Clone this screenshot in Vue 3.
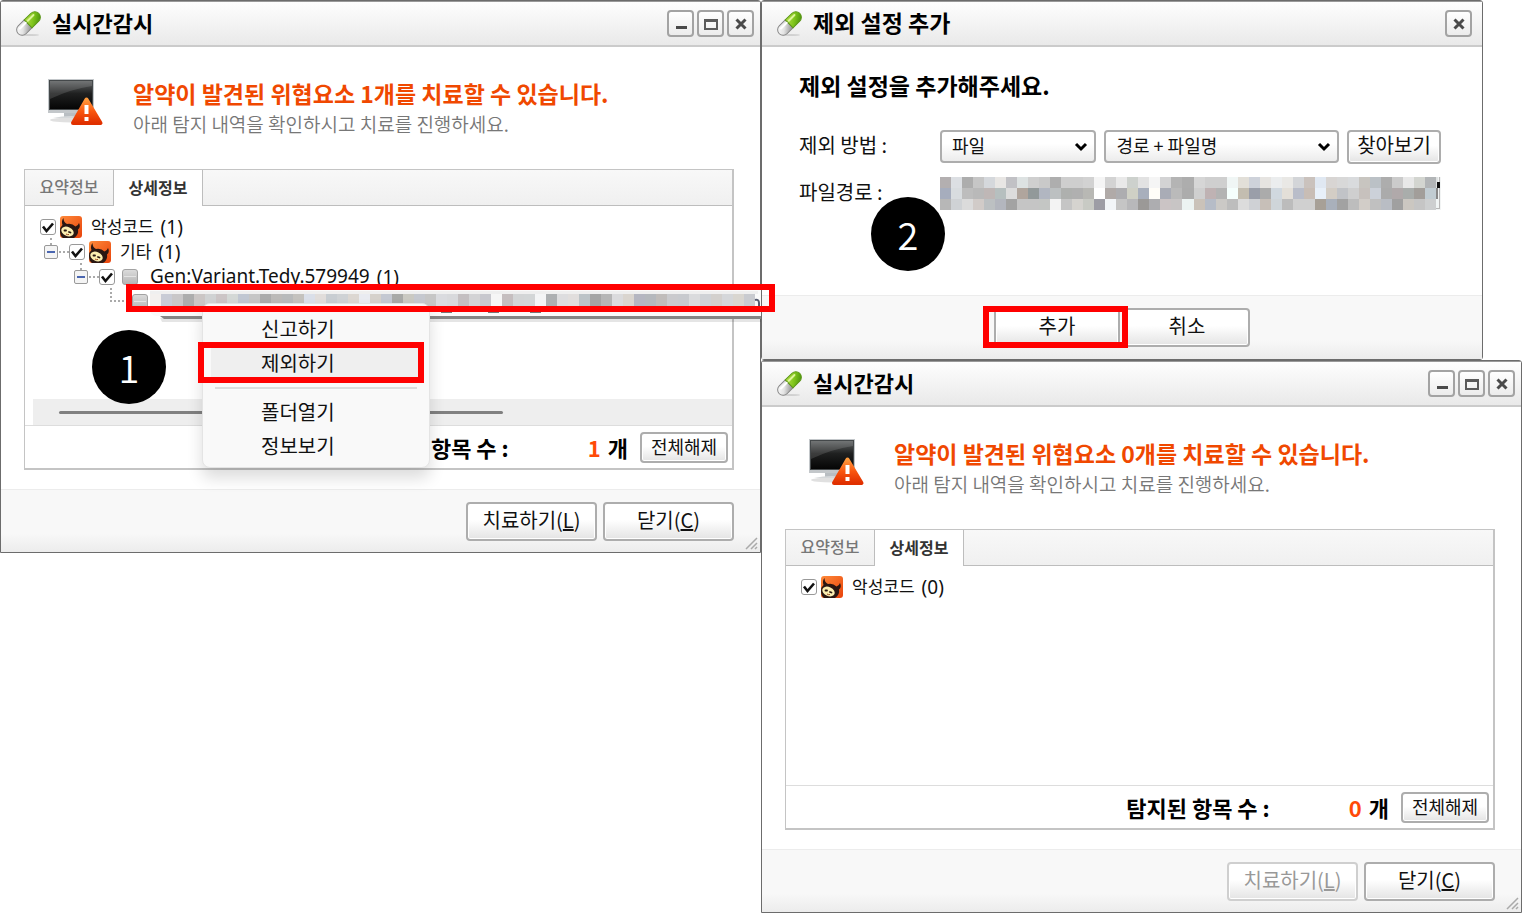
<script setup>
import { ref } from 'vue'

const scanners = [
  {
    id: 'before',
    count: 1,
    canTreat: true,
    rows: [
      { level: 0, kind: 'malware', label: '악성코드', count: '(1)' },
      { level: 1, kind: 'malware', label: '기타', count: '(1)' },
      { level: 2, kind: 'file', label: 'Gen:Variant.Tedy.579949', count: '(1)', latin: true },
      { level: 3, kind: 'leaf', label: '', count: '' },
    ],
  },
  {
    id: 'after',
    count: 0,
    canTreat: false,
    rows: [{ level: 0, kind: 'malware', label: '악성코드', count: '(0)' }],
  },
]

const method = ref('파일')
const scope = ref('경로 + 파일명')

const pathMosaic = [
  'b3afb0 dcdfe3 adadad c6c6c6 d5d8dc e8e6e4 c1c1c5 dde2e2 cfcfcf c9c9c9 aeaeae cecece cecece d2d2d2 f5f5f5 d3d3d3 e9e9e9 cdd1cd e2e2e2 f5f5f5 d3d3d4 b4b4b4 adadad d6d6d6 cfcfcf cfcfcf f0f6f5 e2dfd8 ced2da e6e4e1 ebedee e9e8e5 d3d5d8 cac2bd e0e8f2 d8d5d3 d8d8d8 d9dbdd c8c5c0 bbc1c6 adadad cbcbcb e8e8e8 d3d5d0 b2b5b7 dfe2e2',
  'a6adbd d8dcdf bdbdbd b9b9b9 bfb7b6 b6bfbf dcdcdc b0a59d 92999a b1b6c1 bcc0c1 aeb0ae b0b0b0 b8b8b4 ffffff b0aaa8 adadb0 cfd0c5 a8afbc fffdf8 a9acb6 bababa acacac cfcfcf bfb2b3 b3b3b3 f5fffd c3bdb0 9a9ea9 ababab d0d8df e3dfd8 b9bdc9 c8bdb5 e8f0f9 d3cdc5 c1c3c7 cfcfcf c7c1bd ccd1d9 ababab b0a9aa a9adab a29e9a c1ccd2 888888',
  'b7b7b7 cfd2d5 dbdbdb d1cbc8 bcc0c2 b3b6be a3a3a3 c5c5c5 c5c5c5 c4c6c4 f3f3f3 c5c5c5 d5d3cf c8cac4 9d9da5 f2f5f8 c5c5c5 b8b8ba 9b9997 adadb0 cbc4c5 c8c5c5 ecf3f2 cac2b9 b6bcc7 cbc9c6 bdbdbd dcdcdc cfd1d5 c7bfb8 cfd5d9 bcbcbc d0d0d0 d0d0d0 a7a097 a9b0bb a2a2a2 bdbdbd d2cdc8 c0c0c0 b9bdc4 a0a0a0 cbc7c1 c5c5c5 cdcfd0 f0f5f5',
].map((row) => row.split(' ').map((c) => '#' + c))

const tipMosaic =
  'f3f0ee c9ccd6 c9c7c8 adadad cbc6c5 d0d2d3 ccc5c6 d4d8d6 c1c7d2 c6c6c6 ababab bcbab8 b8babb c4c2be dadfe9 e1dddb c8cdd2 cfd2d5 dcd7d2 e9ebf1 d6d1cb c4c8d2 a8a9a7 cac9c2 c5c8cf c6c6c6 dadbdf d8d9dc c4bfc1 d3d3d5 c8c8ce f6f6f6 c5bebf d3d5d6 d3d6d7 f4f5f6 adb0b2 dddddf e1dedd bcc3c7 a5a5a5 b6b6b6 dbdbdd dad5cf b5b6c1 b5b8bd c0bcba cacacd c8cace dadbdd cfd2d6 d3d0cd d5d7da d9d6d0 c9cbd0'
    .split(' ')
    .map((c) => '#' + c)
</script>

<template>
  <!-- shared icon shapes -->
  <svg class="defs" width="0" height="0" aria-hidden="true">
    <defs>
      <linearGradient id="capGreen" x1="0" y1="0" x2="1" y2="1">
        <stop offset="0" stop-color="#b7e04c" /><stop offset="0.5" stop-color="#7fc41c" /><stop offset="1" stop-color="#3f8a08" />
      </linearGradient>
      <linearGradient id="capWhite" x1="0" y1="0" x2="1" y2="1">
        <stop offset="0" stop-color="#ffffff" /><stop offset="0.5" stop-color="#e4e4e4" /><stop offset="1" stop-color="#8c8c8c" />
      </linearGradient>
      <linearGradient id="screen" x1="0" y1="0" x2="0" y2="1">
        <stop offset="0" stop-color="#5d6061" /><stop offset="0.45" stop-color="#1f2020" /><stop offset="1" stop-color="#050505" />
      </linearGradient>
      <linearGradient id="warn" x1="0" y1="0" x2="0" y2="1">
        <stop offset="0" stop-color="#ff9a3c" /><stop offset="0.5" stop-color="#f9560f" /><stop offset="1" stop-color="#e03000" />
      </linearGradient>
      <linearGradient id="imp" x1="0" y1="0" x2="1" y2="1">
        <stop offset="0" stop-color="#ff8a3a" /><stop offset="1" stop-color="#e8430b" />
      </linearGradient>
      <linearGradient id="greyBox" x1="0" y1="0" x2="0" y2="1">
        <stop offset="0" stop-color="#dcdcdc" /><stop offset="1" stop-color="#b4b4b4" />
      </linearGradient>
      <symbol id="pill" viewBox="0 0 28 28">
        <ellipse cx="15" cy="25" rx="9" ry="1" fill="#000" opacity="0.12" />
        <g transform="rotate(-45 13.5 13.5)">
          <path d="M13 8H4.500a5.500 5.500 0 0 0 0 11H13z" fill="url(#capWhite)" stroke="#858585" />
          <path d="M13 8h9.500a5.500 5.500 0 0 1 0 11h-9.500z" fill="url(#capGreen)" stroke="#5a9516" />
          <path d="M4 11h8" stroke="#fff" stroke-width="2" stroke-linecap="round" />
          <path d="M15 11h8" stroke="#dcf59a" stroke-width="2" stroke-linecap="round" />
        </g>
      </symbol>
      <symbol id="monitor" viewBox="0 0 58 50">
        <ellipse cx="24" cy="42" rx="21" ry="2.500" fill="#000" opacity="0.12" />
        <path d="M17 34h14v5H17z" fill="#b9bec2" />
        <path d="M6 40q18-4 36 0z" fill="#d5d8da" />
        <rect x="1" y="1" width="46" height="34" fill="#c3c7ca" />
        <rect x="2" y="2" width="44" height="30" fill="#44484a" />
        <rect x="3" y="3" width="42" height="28" fill="url(#screen)" />
        <path d="M3 3h42v5Q24 11 3 21z" fill="#fff" opacity="0.13" />
        <path d="M39.500 21.500L53.500 45H26z" fill="url(#warn)" stroke="url(#warn)" stroke-width="4" stroke-linejoin="round" />
        <path d="M37.500 27h4v9h-4zM37.500 39h4v4h-4z" fill="#fff" />
      </symbol>
      <symbol id="imp-icon" viewBox="0 0 22 22">
        <rect width="22" height="22" rx="3" fill="url(#imp)" />
        <path d="M3.500 2Q1 5 2.500 9Q0 11 0 15Q0 20 3 22H14Q19 19 18 13.500Q21 11 19 7Q18 10 15.500 10.500Q12 7 7 8Q3.500 6.500 3.500 2z" fill="#2a1712" />
        <ellipse cx="7.500" cy="15.500" rx="6.500" ry="4.500" transform="rotate(25 7.500 15.500)" fill="#fbeeb0" />
        <path d="M4.500 14.500l1.500 0M9 16l1.500 .5" stroke="#2a1712" stroke-width="1.800" stroke-linecap="round" />
        <path d="M6 18q1.500 1 3 .5" fill="none" stroke="#a04a22" />
      </symbol>
      <symbol id="tick" viewBox="0 0 16 16">
        <path d="M3 7.500L6.500 12L13 4.500" fill="none" stroke="#111" stroke-width="2.600" />
      </symbol>
      <symbol id="grey-box" viewBox="0 0 16 16">
        <rect x="0.500" y="0.500" width="15" height="15" rx="2.500" fill="url(#greyBox)" stroke="#a2a2a2" />
        <path d="M2 7.500h12" stroke="#e4e4e4" />
      </symbol>
      <symbol id="chevron" viewBox="0 0 14 10">
        <path d="M2 2l5 5 5-5" fill="none" stroke="#000" stroke-width="3" />
      </symbol>
    </defs>
  </svg>

  <main class="page">
    <div class="column" v-for="(win, wi) in scanners" :key="win.id">
      <!-- exclusion dialog stacked above the second scanner window -->
      <section v-if="wi === 1" class="window dialog">
        <header class="titlebar">
          <svg class="pill"><use href="#pill" /></svg>
          <h1>제외 설정 추가</h1>
          <div class="controls">
            <button type="button" aria-label="닫기">
              <svg viewBox="0 0 16 16"><path d="M3.500 3.500l9 9M12.500 3.500l-9 9" stroke="#4a4a4a" stroke-width="3" /></svg>
            </button>
          </div>
        </header>
        <div class="dialog-body">
          <h2>제외 설정을 추가해주세요.</h2>
          <div class="field">
            <label for="method">제외 방법 :</label>
            <span class="select method">
              <select id="method" v-model="method"><option>파일</option><option>폴더</option></select>
              <svg><use href="#chevron" /></svg>
            </span>
            <span class="select scope">
              <select v-model="scope" aria-label="범위"><option>경로 + 파일명</option><option>파일명</option></select>
              <svg><use href="#chevron" /></svg>
            </span>
            <button type="button" class="btn browse">찾아보기</button>
          </div>
          <div class="field">
            <span class="name">파일경로 :</span>
            <svg class="path" viewBox="0 0 500 33" preserveAspectRatio="none" shape-rendering="crispEdges">
              <g v-for="(row, y) in pathMosaic" :key="y">
                <rect v-for="(c, x) in row" :key="x" :x="x * 11" :y="y * 11" width="11" height="11" :fill="c" />
              </g>
              <path d="M497 0h3v33h-3z" fill="#f2f4f4" />
              <path d="M499 0v31h-4" fill="none" stroke="#b8b8b8" />
              <path d="M498 5v6" stroke="#111" stroke-width="3" />
            </svg>
          </div>
        </div>
        <footer class="footer center">
          <span class="marked">
            <button type="button" class="btn">추가</button>
            <i class="redbox around-add"></i>
          </span>
          <button type="button" class="btn">취소</button>
        </footer>
        <span class="step step-two">2</span>
      </section>

      <section class="window scanner">
        <header class="titlebar">
          <svg class="pill"><use href="#pill" /></svg>
          <h1>실시간감시</h1>
          <div class="controls">
            <button type="button" aria-label="최소화">
              <svg viewBox="0 0 16 16"><path d="M3 11.500h11" stroke="#4a4a4a" stroke-width="3" /></svg>
            </button>
            <button type="button" aria-label="최대화">
              <svg viewBox="0 0 16 16"><path d="M1 3h14v11H1zM3 6v6h10V6z" fill="#5a5a5a" fill-rule="evenodd" /></svg>
            </button>
            <button type="button" aria-label="닫기">
              <svg viewBox="0 0 16 16"><path d="M3.500 3.500l9 9M12.500 3.500l-9 9" stroke="#4a4a4a" stroke-width="3" /></svg>
            </button>
          </div>
        </header>

        <div class="summary">
          <svg class="monitor"><use href="#monitor" /></svg>
          <div>
            <h2>알약이 발견된 위협요소 {{ win.count }}개를 치료할 수 있습니다.</h2>
            <p>아래 탐지 내역을 확인하시고 치료를 진행하세요.</p>
          </div>
        </div>

        <div class="panel">
          <div class="tabs" role="tablist">
            <button type="button" role="tab" aria-selected="false">요약정보</button>
            <button type="button" role="tab" aria-selected="true" class="active">상세정보</button>
          </div>
          <ul class="tree">
            <li v-for="(row, i) in win.rows" :key="i" :class="['level-' + row.level, row.kind]">
              <span v-if="row.level === 1 || row.level === 2" class="branch"><i class="stem"></i><i class="minus"></i></span>
              <span v-if="row.kind === 'leaf'" class="elbow"></span>
              <label>
                <span v-if="row.kind !== 'leaf'" class="check">
                  <input type="checkbox" checked />
                  <svg><use href="#tick" /></svg>
                </span>
                <svg v-if="row.kind === 'malware'" class="imp"><use href="#imp-icon" /></svg>
                <svg v-else class="grey"><use href="#grey-box" /></svg>
                <span :class="['text', { latin: row.latin }]">{{ row.label }}</span>
                <span class="num">{{ row.count }}</span>
              </label>
            </li>
          </ul>
          <div v-if="win.count" class="hscroll"><i></i></div>
          <div class="totals">
            <span class="caption">탐지된 항목 수 :</span>
            <span class="count">{{ win.count }}</span>
            <span class="unit">개</span>
            <button type="button" class="btn clear">전체해제</button>
          </div>
        </div>

        <footer class="footer">
          <button type="button" class="btn wide" :disabled="!win.canTreat">치료하기(<u>L</u>)</button>
          <button type="button" class="btn wide">닫기(<u>C</u>)</button>
          <svg class="grip" viewBox="0 0 13 13"><path d="M1 12L12 1M6 12l6-6M10 12l2-2" stroke="#aaa" stroke-width="1.500" /></svg>
        </footer>
      </section>

      <template v-if="wi === 0">
        <svg class="tip" viewBox="0 0 611 38">
          <path d="M10 31H611V35H12z" fill="#000" opacity="0.1" />
          <path d="M10 29H611V32H14z" fill="#858585" />
          <path d="M0 0H611V29H7Q0 29 0 22z" fill="#fafafa" />
          <g shape-rendering="crispEdges">
            <path d="M0 4H608V7H0z" fill="#efefef" />
            <rect v-for="(c, x) in tipMosaic" :key="x" :x="x * 11" y="7" width="11" height="13" :fill="c" />
            <path d="M291 25h11M338 25h11M380 25h11" stroke="#777" stroke-width="2" />
          </g>
          <path d="M605 13q4-1 4 3v3" fill="none" stroke="#555a70" stroke-width="2" />
        </svg>
        <ul class="menu" role="menu">
          <li><button type="button" role="menuitem">신고하기</button></li>
          <li class="hot"><button type="button" role="menuitem">제외하기</button><i class="redbox around-item"></i></li>
          <li class="rule" role="separator"></li>
          <li><button type="button" role="menuitem">폴더열기</button></li>
          <li><button type="button" role="menuitem">정보보기</button></li>
        </ul>
        <i class="redbox around-row"></i>
        <span class="step step-one">1</span>
      </template>
    </div>
  </main>
</template>

<style>
body {
  background: #fff;
}
</style>

<style scoped>
* {
  box-sizing: border-box;
}
h1,
h2,
p,
ul {
  margin: 0;
  padding: 0;
  font-size: inherit;
  list-style: none;
}
button,
select,
input {
  font: inherit;
  color: inherit;
  margin: 0;
}
.defs {
  position: absolute;
}
.page {
  display: grid;
  grid-template-columns: 1fr 1fr;
  align-items: start;
  font-family: 'Noto Sans CJK KR', 'Noto Sans', sans-serif;
  font-size: 20px;
  line-height: 24px;
  color: #111;
}
.column {
  position: relative;
}
.window {
  display: flex;
  flex-direction: column;
  border: 1px solid #6c6c6c;
  border-radius: 3px 3px 0 0;
  background: #fff;
}
.dialog {
  position: relative;
  margin-right: 39px;
  border-radius: 3px;
}
.titlebar {
  display: flex;
  align-items: center;
  height: 46px;
  padding: 0 6px 0 14px;
  border-top: 1px solid #999;
  border-bottom: 2px solid #cbcbcb;
  background: linear-gradient(#fefefe, #e9e9e9);
}
.dialog .titlebar {
  padding-right: 10px;
}
.pill {
  width: 28px;
  height: 28px;
}
.titlebar h1 {
  flex: 1;
  margin-left: 9px;
  padding-bottom: 3px;
  font-size: 22px;
  font-weight: 700;
  color: #000;
}
.titlebar .pill {
  flex: none;
}
.dialog .titlebar h1 {
  font-size: 23px;
}
.controls {
  display: flex;
  gap: 3px;
}
.controls button {
  display: grid;
  place-items: center;
  width: 27px;
  height: 27px;
  padding: 0;
  border: 2px solid #a3a3a3;
  border-radius: 4px;
  background: linear-gradient(#fff, #ececec);
}
.controls svg {
  width: 16px;
  height: 16px;
}
.summary {
  display: flex;
  gap: 28px;
  padding: 31px 24px 0 46px;
  height: 122px;
}
.monitor {
  flex: none;
  width: 58px;
  height: 50px;
}
.summary h2 {
  margin-top: 3px;
  font-size: 23px;
  font-weight: 700;
  color: #f04800;
}
.summary p {
  margin-top: 7px;
  font-size: 19px;
  font-weight: 350;
  color: #777;
}
.panel {
  display: flex;
  flex-direction: column;
  min-height: 301px;
  margin: 0 26px 19px 23px;
  border: 2px solid #c4c4c4;
  border-width: 1px 2px 2px 1px;
}
.tabs {
  display: flex;
  height: 36px;
  border-bottom: 1px solid #bdbdbd;
  background: linear-gradient(#f8f8f8, #f0f0f0);
}
.tabs button {
  width: 89px;
  height: 35px;
  padding: 0 0 3px;
  border: 0;
  border-right: 1px solid #bdbdbd;
  background: none;
  font-size: 16px;
  font-weight: 500;
  color: #777;
}
.tabs .active {
  height: 36px;
  background: #fff;
  font-weight: 700;
  color: #333;
}
.tree {
  flex: 1;
  padding: 8px 0 0 15px;
}
.tree li {
  display: flex;
  align-items: center;
  height: 25px;
}
.tree label {
  display: flex;
  align-items: center;
  white-space: nowrap;
}
.level-1 {
  padding-left: 4px;
}
.level-2 {
  padding-left: 34px;
}
.level-3 {
  padding-left: 70px;
}
.branch {
  position: relative;
  display: flex;
  width: 25px;
  border-bottom: 2px dotted #aaa;
}
.stem {
  position: absolute;
  left: 6px;
  bottom: 6px;
  height: 7px;
  border-left: 2px dotted #aaa;
}
.minus {
  position: absolute;
  left: 0;
  bottom: -8px;
  width: 14px;
  height: 14px;
  border: 1px solid #999;
  border-radius: 2px;
  background: linear-gradient(#4a66b0, #4a66b0) center / 8px 2px no-repeat, #f4f4f4;
}
.elbow {
  width: 22px;
  height: 14px;
  margin-bottom: 14px;
  border-left: 2px dotted #aaa;
  border-bottom: 2px dotted #aaa;
}
.check {
  position: relative;
  width: 16px;
  height: 16px;
}
.check input {
  display: block;
  width: 16px;
  height: 16px;
  appearance: none;
  border: 1px solid #999;
  border-radius: 3px;
  background: #fff;
}
.check svg {
  position: absolute;
  inset: 0;
  width: 16px;
  height: 16px;
  pointer-events: none;
}
.imp {
  width: 22px;
  height: 22px;
  margin: 0 9px 0 4px;
}
.grey {
  width: 16px;
  height: 16px;
  margin: 0 12px 0 7px;
}
.leaf .grey {
  margin: 0;
}
.text {
  padding-bottom: 1px;
  font-size: 17px;
}
.latin,
.num {
  font-family: 'Noto Sans', sans-serif;
  font-size: 19px;
}
.num {
  margin-left: 7px;
}
.hscroll {
  height: 26px;
  margin-left: 8px;
  padding: 12px 0 0 26px;
  background: #eee;
}
.hscroll i {
  display: block;
  width: 66%;
  height: 3px;
  border-radius: 2px;
  background: #808080;
}
.totals {
  display: flex;
  align-items: center;
  justify-content: flex-end;
  height: 43px;
  padding-right: 4px;
  border-top: 1px solid #ddd;
  font-size: 22px;
  font-weight: 700;
  color: #000;
}
.count {
  width: 92px;
  text-align: right;
  color: #ff4a08;
}
.unit {
  margin: 0 12px 0 7px;
}
.btn {
  width: 126px;
  height: 39px;
  padding: 0 0 3px;
  border: 2px solid #adadad;
  border-radius: 4px;
  background: linear-gradient(#fff 45%, #e4e4e4);
  box-shadow: inset 0 0 0 1px #fff;
  font-size: 20px;
  font-weight: 400;
  line-height: 24px;
  color: #111;
}
.wide {
  width: 131px;
}
.btn:disabled {
  border-color: #cfcfcf;
  color: #999;
}
.clear {
  width: 88px;
  height: 31px;
  font-size: 18px;
}
.footer {
  position: relative;
  display: flex;
  gap: 6px;
  justify-content: flex-end;
  height: 63px;
  padding: 12px 26px 0;
  border-top: 1px solid #ececec;
  background: linear-gradient(#f8f8f8 70%, #ececec);
}
.footer.center {
  justify-content: center;
  gap: 4px;
}
.grip {
  position: absolute;
  right: 2px;
  bottom: 2px;
  width: 13px;
  height: 13px;
}
.dialog-body {
  display: flex;
  flex-direction: column;
  height: 248px;
  padding: 26px 41px 0 37px;
}
.dialog-body h2 {
  margin-bottom: 33px;
  font-size: 23px;
  font-weight: 700;
  color: #000;
}
.field {
  display: flex;
  align-items: center;
  gap: 8px;
  height: 33px;
  margin-bottom: 14px;
}
.field label,
.name {
  flex: none;
  width: 133px;
  padding-bottom: 3px;
}
.select {
  position: relative;
  display: flex;
}
.method {
  flex: 156;
}
.scope {
  flex: 234;
}
.select select {
  width: 100%;
  height: 33px;
  padding: 0 30px 4px 10px;
  appearance: none;
  border: 2px solid #adadad;
  border-radius: 4px;
  background: linear-gradient(#fff 40%, #ececec);
  font-size: 18px;
  line-height: 24px;
}
.select svg {
  position: absolute;
  right: 8px;
  top: 12px;
  width: 14px;
  height: 10px;
  pointer-events: none;
}
.browse {
  width: 94px;
  height: 34px;
}
.path {
  flex: 1;
  height: 33px;
}
.dialog .footer {
  height: 64px;
}
.marked {
  position: relative;
}
.redbox {
  position: absolute;
  z-index: 5;
  border: 6px solid #f00;
  pointer-events: none;
}
.around-add {
  left: -11px;
  top: -2px;
  width: 145px;
  height: 42px;
}
.around-row {
  left: 126px;
  top: 284px;
  width: 649px;
  height: 28px;
}
.around-item {
  left: -13px;
  top: -4px;
  width: 226px;
  height: 41px;
}
.tip {
  position: absolute;
  z-index: 3;
  left: 150px;
  top: 287px;
  width: 611px;
  height: 38px;
}
.menu {
  position: absolute;
  z-index: 4;
  left: 202px;
  top: 303px;
  width: 228px;
  padding: 8px 8px 4px;
  border: 1px solid #e4e4e4;
  border-radius: 8px;
  background: #f9f9f9;
  box-shadow: 0 10px 16px rgba(0, 0, 0, 0.14);
}
.menu li {
  position: relative;
}
.menu button {
  display: block;
  width: 100%;
  height: 34px;
  padding: 0 0 1px 50px;
  border: 0;
  border-radius: 4px;
  background: none;
  text-align: left;
}
.menu .hot button {
  background: #efefef;
}
.menu .rule {
  height: 2px;
  margin: 7px 4px 6px;
  background: #dcdcdc;
}
.step {
  position: absolute;
  z-index: 6;
  display: grid;
  place-items: center;
  width: 74px;
  height: 74px;
  border-radius: 50%;
  background: #000;
  color: #fff;
  font-size: 38px;
  font-weight: 350;
  line-height: 72px;
}
.step-one {
  left: 92px;
  top: 330px;
}
.step-two {
  left: 109px;
  top: 196px;
}
</style>
